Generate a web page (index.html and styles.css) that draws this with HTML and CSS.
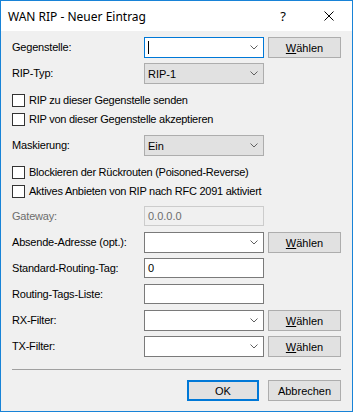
FILE: index.html
```html
<!DOCTYPE html>
<html lang="de">
<head>
  <meta charset="UTF-8">
  <title>WAN RIP - Neuer Eintrag</title>
  <link rel="stylesheet" href="styles.css">
</head>
<body>
  <div class="window">
    <div class="titlebar">
      <span class="title">WAN RIP - Neuer Eintrag</span>
      <span class="caption-btn help">?</span>
      <span class="caption-btn">
        <svg width="10" height="10" viewBox="0 0 10 10"><path d="M0.5 0.5 L9.5 9.5 M9.5 0.5 L0.5 9.5" stroke="#000" stroke-width="1" fill="none"/></svg>
      </span>
    </div>

    <div class="content">
      <div class="row">
        <span class="label">Gegenstelle:</span>
        <div class="combo edit focus"><span class="caret"></span><svg class="chev" width="8" height="5" viewBox="0 0 8 5"><path d="M0.5 0.5 L4 4 L7.5 0.5" stroke="#606060" fill="none"/></svg></div>
        <button class="btn"><u>W</u>ählen</button>
      </div>
      <div class="row">
        <span class="label">RIP-Typ:</span>
        <div class="combo list">RIP-1<svg class="chev" width="8" height="5" viewBox="0 0 8 5"><path d="M0.5 0.5 L4 4 L7.5 0.5" stroke="#606060" fill="none"/></svg></div>
      </div>

      <div class="checks first">
        <div class="check"><span class="box"></span>RIP zu dieser Gegenstelle senden</div>
        <div class="check"><span class="box"></span>RIP von dieser Gegenstelle akzeptieren</div>
      </div>

      <div class="row">
        <span class="label">Maskierung:</span>
        <div class="combo list">Ein<svg class="chev" width="8" height="5" viewBox="0 0 8 5"><path d="M0.5 0.5 L4 4 L7.5 0.5" stroke="#606060" fill="none"/></svg></div>
      </div>

      <div class="checks second">
        <div class="check"><span class="box"></span>Blockieren der Rückrouten (Poisoned-Reverse)</div>
        <div class="check"><span class="box"></span>Aktives Anbieten von RIP nach RFC 2091 aktiviert</div>
      </div>

      <div class="row">
        <span class="label disabled">Gateway:</span>
        <div class="textbox disabled">0.0.0.0</div>
      </div>
      <div class="row">
        <span class="label">Absende-Adresse (opt.):</span>
        <div class="combo edit"><svg class="chev" width="8" height="5" viewBox="0 0 8 5"><path d="M0.5 0.5 L4 4 L7.5 0.5" stroke="#606060" fill="none"/></svg></div>
        <button class="btn"><u>W</u>ählen</button>
      </div>
      <div class="row">
        <span class="label">Standard-Routing-Tag:</span>
        <div class="textbox">0</div>
      </div>
      <div class="row">
        <span class="label">Routing-Tags-Liste:</span>
        <div class="textbox"></div>
      </div>
      <div class="row">
        <span class="label">RX-Filter:</span>
        <div class="combo edit"><svg class="chev" width="8" height="5" viewBox="0 0 8 5"><path d="M0.5 0.5 L4 4 L7.5 0.5" stroke="#606060" fill="none"/></svg></div>
        <button class="btn"><u>W</u>ählen</button>
      </div>
      <div class="row">
        <span class="label">TX-Filter:</span>
        <div class="combo edit"><svg class="chev" width="8" height="5" viewBox="0 0 8 5"><path d="M0.5 0.5 L4 4 L7.5 0.5" stroke="#606060" fill="none"/></svg></div>
        <button class="btn"><u>W</u>ählen</button>
      </div>

      <div class="separator"></div>

      <div class="actions">
        <button class="btn default">OK</button>
        <button class="btn">Abbrechen</button>
      </div>
    </div>
  </div>
</body>
</html>
```

FILE: styles.css
```css
body {
  margin: 0;
  background-color: #f0f0f0;
  font-family: 'Liberation Sans', Arial, sans-serif;
  font-size: 11px;
  color: #000;
}
.window {
  width: 353px;
  height: 412px;
  box-sizing: border-box;
  border: 1px solid #1883d7;
  background-color: #f0f0f0;
}
.titlebar {
  height: 30px;
  background-color: #fff;
  display: flex;
  align-items: center;
}
.title {
  font-family: 'Noto Sans', sans-serif;
  font-size: 12px;
  padding-left: 7px;
  flex: 1;
}
.caption-btn {
  width: 46px;
  height: 30px;
  display: flex;
  justify-content: center;
  align-items: center;
}
.help {
  font-family: 'Noto Sans', sans-serif;
  font-size: 13px;
}
.content {
  padding: 6px 11px 0 11px;
}
.row {
  display: flex;
  align-items: flex-start;
  height: 26px;
}
.label {
  width: 132px;
  line-height: 21px;
  letter-spacing: -0.2px;
}
.label.disabled {
  color: #6d6d6d;
  line-height: 20px;
}
.combo,
.textbox {
  width: 120px;
  box-sizing: border-box;
  display: flex;
  align-items: center;
  padding: 0 5px 0 3px;
}
.combo {
  height: 21px;
}
.combo.edit {
  background-color: #fff;
  border: 1px solid #7a7a7a;
}
.combo.focus {
  border-color: #0078d7;
}
.combo.list {
  background-color: #e1e1e1;
  border: 1px solid #adadad;
}
.chev {
  margin-left: auto;
}
.caret {
  width: 1px;
  height: 13px;
  background-color: #000;
}
.textbox {
  height: 20px;
  background-color: #fff;
  border: 1px solid #7a7a7a;
}
.textbox.disabled {
  background-color: #f0f0f0;
  border-color: #cccccc;
  color: #6d6d6d;
}
.btn {
  width: 73px;
  height: 21px;
  margin-left: 4px;
  padding: 0;
  box-sizing: border-box;
  background-color: #e1e1e1;
  border: 1px solid #adadad;
  font-family: 'Liberation Sans', Arial, sans-serif;
  font-size: 11px;
  color: #000;
}
.btn.default {
  width: 72px;
  border: 2px solid #0078d7;
}
.checks.first {
  padding: 5px 0 3px 0;
}
.checks.second {
  padding: 5px 0 2px 0;
}
.check {
  height: 19px;
  display: flex;
  align-items: flex-start;
  line-height: 13px;
  letter-spacing: -0.25px;
}
.box {
  width: 13px;
  height: 13px;
  box-sizing: border-box;
  border: 1px solid #333;
  background-color: #fff;
  margin-right: 4px;
}
.separator {
  height: 1px;
  background-color: #a0a0a0;
  margin-top: 7px;
}
.actions {
  display: flex;
  justify-content: flex-end;
  gap: 5px;
  margin-top: 10px;
}
```
